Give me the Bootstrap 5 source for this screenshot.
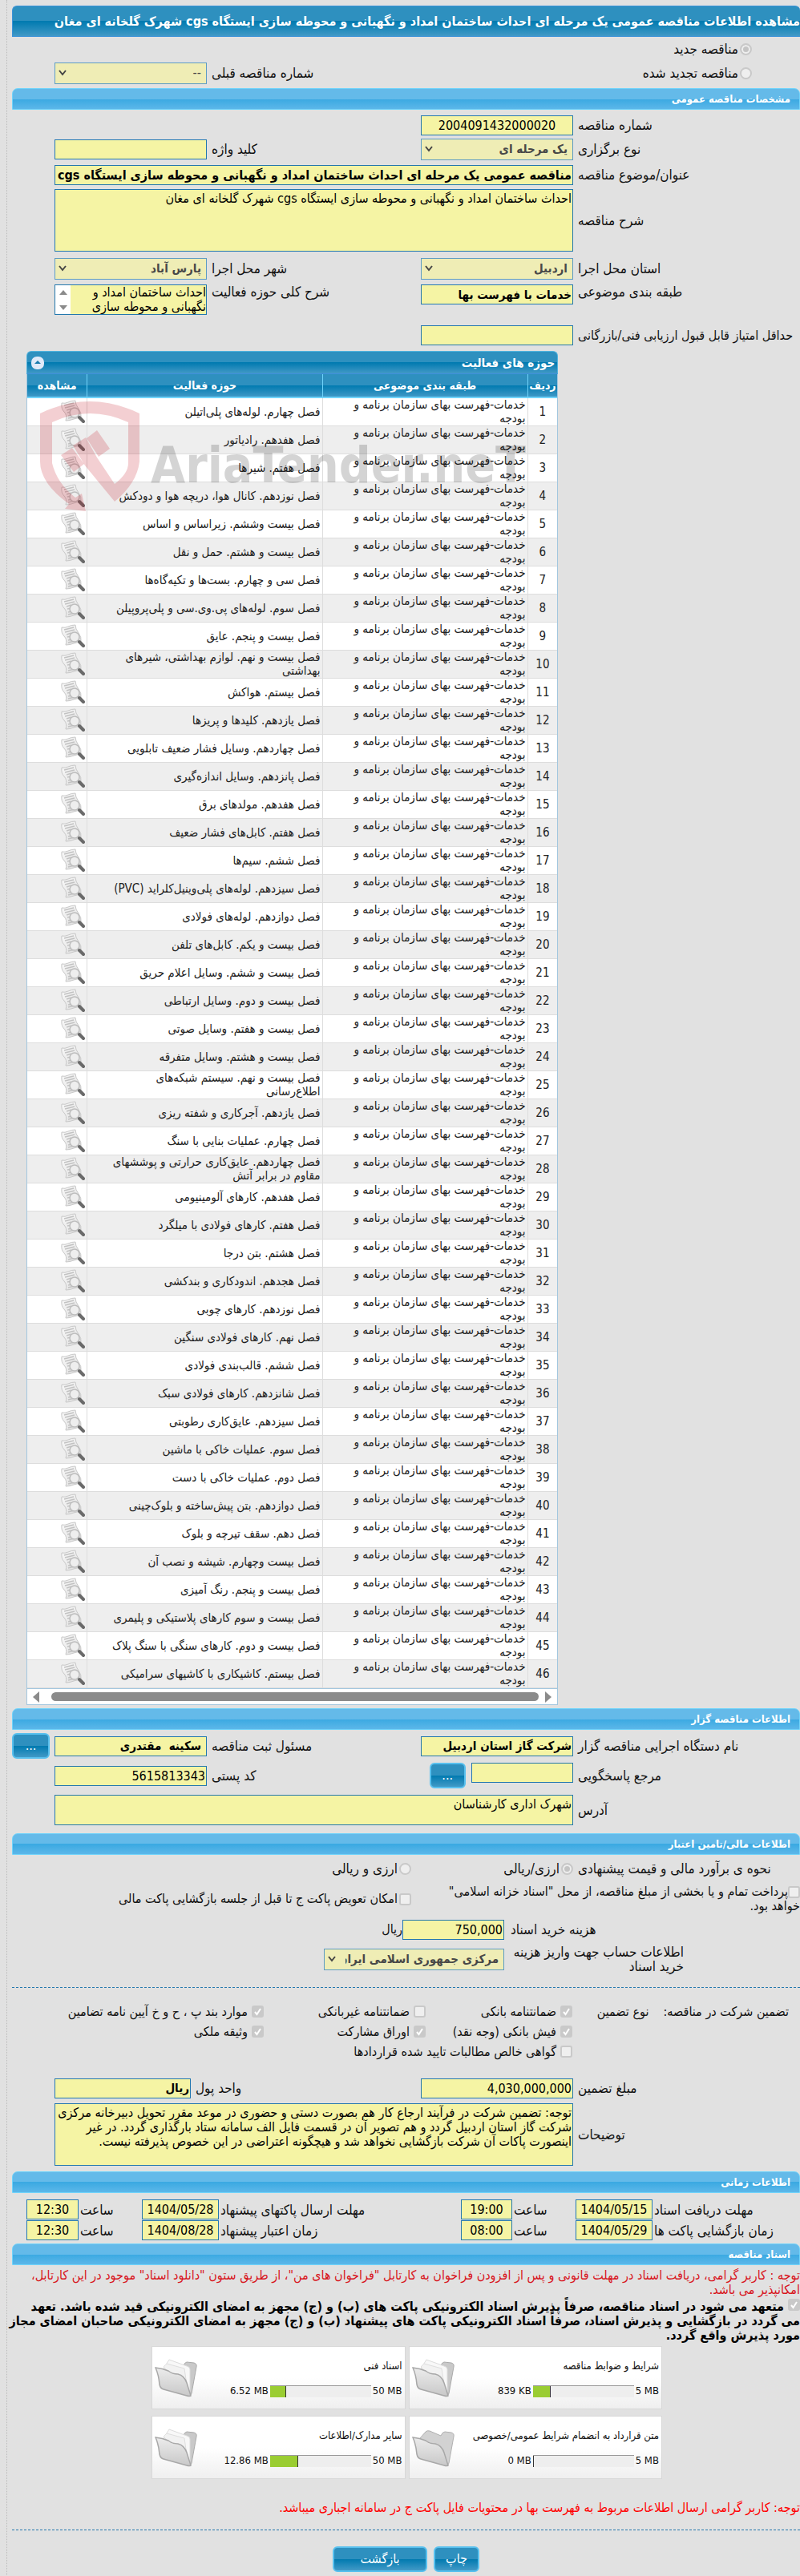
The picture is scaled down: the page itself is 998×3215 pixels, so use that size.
<!DOCTYPE html>
<html lang="fa" dir="rtl">
<head>
<meta charset="utf-8">
<meta name="viewport" content="width=device-width, initial-scale=1">
<title>مشاهده اطلاعات مناقصه عمومی</title>
<link rel="stylesheet" href="https://cdn.jsdelivr.net/npm/bootstrap@5.3.0/dist/css/bootstrap.min.css">
<style>
  body { background: #e1e1e1; color: #111; font: 16px/18px "DejaVu Sans Condensed", "DejaVu Sans", sans-serif; overflow-x: hidden; }
  .page-frame { margin-left: 8px; padding: 7px 0 4px 6px; border-left: 1px dotted #bbb; }
  .title-strip { height: 39px; margin: 0; font-size: 16px; font-weight: 700; color: #fff; white-space: nowrap; overflow: hidden;
    border: 1px solid #3a92d8; border-radius: 6px 6px 0 0; border-right: 0;
    background: linear-gradient(#2e90bf 0 50%, #007ab0 50%, #4199c6); }
  .section-strip { height: 27px; margin: 0; padding: 0 11px; font-size: 13px; font-weight: 700; color: #fff;
    border: 1px solid #6fd3fa; border-radius: 7px 7px 0 0;
    background: linear-gradient(#64bae9 0 50%, #3aa9e2 50%, #5cb7e9); }
  .frow { display: grid; column-gap: 6px; align-items: center; grid-template-columns: 277fr 190fr 255fr 190fr 47fr; min-height: 30px; }
  .frow > * { min-width: 0; }
  .frow > label, .lbl { text-align: left; font-size: 17px; white-space: nowrap; }
  .frow > .tight { font-size: 16px; }
  .h34 { min-height: 34px; } .h40 { min-height: 40px; }
  .wide { grid-column: 2 / span 3; }
  .fld { width: 100%; height: 25px; padding: 0 1px; border: 1px solid #2478ae; border-radius: 0; background: #f5f4a4; color: #000; font-size: 16px; line-height: 18px; display: block; }
  textarea.fld { resize: none; overflow: hidden; padding-top: 2px; }
  .sel { width: 100%; height: 27px; padding: 0 6px 0 26px; border: 1px solid #5d9cc4; border-radius: 0; color: #484848; opacity: 1; font-size: 16px; font-weight: 400; appearance: none;
    background: #efedb5 url("data:image/svg+xml,%3Csvg xmlns='http://www.w3.org/2000/svg' width='12' height='8'%3E%3Cpath d='M2 1l4 5 4-5' fill='none' stroke='%23444' stroke-width='2'/%3E%3C/svg%3E") no-repeat 3px center; }
  .semi { font-weight: 700; font-size: 15px; }
  .wide.semi { font-size: 16px; }
  .tick { appearance: none; flex: none; width: 15px; height: 15px; margin: 0; border: 2px solid #c9c9c9; border-radius: 3px; background: #efefef; }
  .tick[type=radio] { border-radius: 50%; }
  .tick[type=radio]:checked { background: #c4c4c4; box-shadow: inset 0 0 0 2px #efefef; }
  .tick[type=checkbox]:checked { border-color: #c9c9c9; background: #c9c9c9 url("data:image/svg+xml,%3Csvg xmlns='http://www.w3.org/2000/svg' viewBox='0 0 11 11'%3E%3Cpath d='M2 6l2.500 3L9 2' fill='none' stroke='%23fff' stroke-width='2'/%3E%3C/svg%3E") center/contain; }
  .opt { display: flex; align-items: center; gap: 2px; font-size: 17px; white-space: nowrap; }
  .inset { padding-right: 60px; }
  .gloss { border: 2px solid #57c0ee; border-radius: 6px; color: #fff; background: linear-gradient(#2e90bf 0 50%, #007ab0 50%, #4199c6); height: 32px; padding: 0; }
  .spin { width: 19px; background: #fff; flex: none; }
  .grid-box { position: relative; width: 67.5%; margin-right: 30.7%; }
  .grid-head { height: 29px; padding: 0 3px 0 5px; color: #fff; font-weight: 700; font-size: 15px; border: 1px solid #4fb2dd; border-bottom-color: #3f8fdb; border-radius: 6px 6px 0 0; background: linear-gradient(#2e90bf 0 50%, #007ab0 50%, #4199c6); }
  .grid-data { width: 100%; table-layout: fixed; font-size: 15px; line-height: 17px; border: 1px solid #a3c7df; border-top: 0; border-collapse: separate; border-spacing: 0; color: #222; }
  .grid-data th { height: 30px; padding: 0; text-align: center; color: #fff; font-size: 14px; border-bottom: 2px solid #6fd3fa; border-left: 1px solid #6fd3fa; background: linear-gradient(#2e90bf 0 50%, #007ab0 50%, #3f98c6); white-space: nowrap; }
  .grid-data td { height: 35px; padding: 0 2px 0 18px; border-bottom: 1px solid #ddd; border-left: 1px solid #ddd; background: #fff; vertical-align: middle; }
  .grid-data tr:nth-child(even) td { background: #eee; }
  .grid-data td:nth-child(1) { text-align: center; padding: 0; }
  .grid-data td:nth-child(4) { padding: 0 2px 0 0; }
  .grid-data th:last-child, .grid-data td:last-child { border-left: 0; }
  .grid-data svg { display: block; }
  .hbar { height: 20px; padding: 0 7px; background: #fff; border: 1px solid #a3c7df; border-top: 0; }
  .hbar i { flex: 1; height: 11px; border-radius: 6px; background: #8b8b8b; margin: 0 8px 0 15px; }
  .wmark { position: absolute; left: 0; top: 53px; pointer-events: none; }
  .dash { border-top: 1px dashed #2478ae; margin: 0; opacity: 1; color: inherit; }
  .two { grid-template-columns: 479fr 498fr; } .three { grid-template-columns: 277fr 196fr 498fr; }
  .pay { grid-template-columns: 369fr 127fr 487fr; column-gap: 0; } .bank { grid-template-columns: 361fr 225fr 381fr; column-gap: 8px; }
  .warranty { display: grid; grid-template-columns: 284fr 183fr 202fr 314fr; grid-auto-rows: 25px; align-items: center; }
  .warranty .opt { gap: 5px; font-size: 16px; }
  .money { grid-template-columns: 277fr 190fr 275fr 170fr 47fr; }
  .times { display: grid; column-gap: 2px; grid-template-columns: 182fr 96fr 75fr 64fr 298fr 96fr 75fr 65fr 16fr; align-items: center; row-gap: 1px; }
  .times .fld { text-align: center; padding: 0; }
  .pledge { margin: 2px 0 4px -5px; color: #000; font-weight: 700; }
  .docs { display: grid; grid-template-columns: 1fr 1fr; gap: 8px 4px; width: 64.8%; margin-right: 17.5%; }
  .doc { height: 79px; border: 1px solid #d8d8d8; background: linear-gradient(#fff 0 50%, #efefef); padding: 15px 3px 0; font-size: 13px; display: flex; justify-content: space-between; }
  .doc .meter { display: flex; gap: 2px; margin-top: 13px; align-items: center; }
  .doc .track { width: 126px; height: 15px; background: #eee; border-top: 1px solid #999; }
  .doc .track b { display: block; height: 14px; background: #9acd32; border-right: 1px solid #333; }
</style>
</head>
<body>
<svg width="0" height="0" class="position-absolute" aria-hidden="true">
  <defs>
    <linearGradient id="gp" x1="0" y1="0" x2="1" y2="1"><stop offset="0" stop-color="#fafafa"/><stop offset="1" stop-color="#dcdcdc"/></linearGradient>
    <linearGradient id="gf" x1="0" y1="0" x2="0" y2="1"><stop offset="0" stop-color="#ececec"/><stop offset="1" stop-color="#c8c8c8"/></linearGradient>
    <symbol id="look" viewBox="0 0 30 30">
      <path d="M1 4q4 1 8-1t9-2q0 5 4 10t3 12q-4-1-9 1t-10 2q2-7-2-11T1 4z" fill="url(#gp)" stroke="#c8c8c8"/>
      <path d="M4 7l12-3M5 10l12-3M7 13l6-2M8 16l5-1M9 20l5-1M9 23l8-2" stroke="#c2c2c2" stroke-width="1.500"/>
      <circle cx="17" cy="16" r="6" fill="#eee" fill-opacity=".9" stroke="#bdbdbd" stroke-width="1.500"/>
      <path d="M23 22l5 5" stroke="#6a6a6a" stroke-width="4" stroke-linecap="round"/>
    </symbol>
    <symbol id="folder" viewBox="0 0 54 48">
      <path d="M34 14q2-9 6-10l9 1q4 1 3 5l-6 33q-1 4-4 3z" fill="#c9c9c9" stroke="#aaa"/>
      <path d="M11 12L18 1l22 8q4 1 4 4v28z" fill="#f8f8f8" stroke="#dcdcdc"/>
      <path d="M11 10l4-4 22 6 4 28z" fill="#f2f2f2" stroke="#dedede"/>
      <path d="M1 11q9 1 16 4 5 4 12 4 8 2 11 11l5 16q-2 1-5 0L11 38Q7 37 6 32 5 20 1 11z" fill="url(#gf)" stroke="#a8a8a8" stroke-width="1.500"/>
    </symbol>
    <symbol id="folder-empty" viewBox="0 0 54 48">
      <path d="M10 12l7-8q2-2 5-1l14 6q2-5 5-5l8 1q4 1 3 5l-6 33q-1 4-4 3z" fill="#d2d2d2" stroke="#b0b0b0"/>
      <path d="M1 11q9 1 16 4 5 4 12 4 8 2 11 11l5 16q-2 1-5 0L11 38Q7 37 6 32 5 20 1 11z" fill="url(#gf)" stroke="#a8a8a8" stroke-width="1.500"/>
    </symbol>
  </defs>
</svg>
<main class="page-frame">
  <h1 class="title-strip d-flex align-items-center">مشاهده اطلاعات مناقصه عمومی یک مرحله ای احداث ساختمان امداد و نگهبانی و محوطه سازی ایستگاه cgs شهرک گلخانه ای مغان</h1>
  <div class="frow"><div class="opt inset"><input class="tick" type="radio" name="kind" id="k1" checked disabled><label for="k1">مناقصه جدید</label></div></div>
  <div class="frow mb-1"><div class="opt inset"><input class="tick" type="radio" name="kind" id="k2" disabled><label for="k2">مناقصه تجدید شده</label></div><span></span><label for="prev">شماره مناقصه قبلی</label><select class="sel" id="prev" disabled><option>--</option></select></div>

  <h2 class="section-strip d-flex align-items-center">مشخصات مناقصه عمومی</h2>
  <div class="frow mt-1"><label for="no">شماره مناقصه</label><input class="fld text-center" id="no" value="2004091432000020" readonly></div>
  <div class="frow"><label for="type">نوع برگزاری</label><select class="sel semi" id="type" disabled><option>یک مرحله ای</option></select><label for="kw">کلید واژه</label><input class="fld" id="kw" readonly></div>
  <div class="frow h34"><label for="subj">عنوان/موضوع مناقصه</label><input class="fld wide semi" id="subj" value="مناقصه عمومی یک مرحله ای احداث ساختمان امداد و نگهبانی و محوطه سازی ایستگاه cgs شهرک گلخانه ای مغان" readonly></div>
  <div class="frow" style="min-height:80px"><label for="desc">شرح مناقصه</label><textarea class="fld wide" id="desc" style="height:78px" readonly>احداث ساختمان امداد و نگهبانی و محوطه سازی ایستگاه cgs شهرک گلخانه ای مغان</textarea></div>
  <div class="frow h40"><label for="prov">استان محل اجرا</label><select class="sel semi" id="prov" disabled><option>اردبیل</option></select><label for="city">شهر محل اجرا</label><select class="sel semi" id="city" disabled><option>پارس آباد</option></select></div>
  <div class="frow align-items-start"><label for="cls">طبقه بندی موضوعی</label><input class="fld semi" id="cls" value="خدمات با فهرست بها" readonly><label for="area">شرح کلی حوزه فعالیت</label>
    <div class="fld d-flex p-0" style="height:38px"><textarea class="border-0 flex-grow-1 bg-transparent p-0" id="area" style="resize:none;overflow:hidden;width:0;height:36px" readonly>احداث ساختمان امداد و نگهبانی و محوطه سازی</textarea><svg class="spin" height="36" viewBox="0 0 19 36"><path d="M5 12l5-6 5 6zM5 25l5 6 5-6z" fill="#8b8b8b"/></svg></div></div>
  <div class="frow" style="min-height:45px;padding-top:6px"><label class="tight" for="min">حداقل امتیاز قابل قبول ارزیابی فنی/بازرگانی</label><input class="fld" id="min" readonly></div>

  <section class="grid-box">
    <div class="grid-head d-flex align-items-center justify-content-between"><span>حوزه های فعالیت</span>
      <svg width="16" height="16" viewBox="0 0 16 16"><rect width="16" height="16" rx="7" fill="#dfe9f8"/><path d="M4 9l4-4 4 4z" fill="#1879ad"/></svg></div>
    <table class="grid-data">
      <colgroup><col style="width:5.7%"><col style="width:38.7%"><col style="width:44.3%"><col></colgroup>
      <thead><tr><th>ردیف</th><th>طبقه بندی موضوعی</th><th>حوزه فعالیت</th><th>مشاهده</th></tr></thead>
      <tbody id="rows"></tbody>
    </table>
    <div class="hbar d-flex align-items-center"><svg width="8" height="14"><path d="M0 0l8 7-8 7z" fill="#8b8b8b"/></svg><i></i><svg width="8" height="14"><path d="M8 0L0 7l8 7z" fill="#8b8b8b"/></svg></div>
    <svg class="wmark" width="640" height="150" viewBox="0 0 640 150" aria-hidden="true">
      <g fill="#c00010" fill-opacity=".19"><path d="M17 25Q79-5 141 25V85Q138 112 110 135L73 90 58 65 74 55 88 80 110 113Q127 100 127 87V36Q79 14 32 36V87Q38 112 61 130L69 125 74 147 48 144 53 138Q17 112 17 85Z"/><path d="M88 46l16 23-14 10-15-23zM43 77l14-9 15 20-13 10z"/></g>
      <text x="155" y="111" direction="ltr" font-family="DejaVu Sans Condensed, sans-serif" font-weight="700" font-size="62" fill="#000" fill-opacity=".17">AriaTender.neT</text>
    </svg>
  </section>

  <h2 class="section-strip d-flex align-items-center mt-1">اطلاعات مناقصه گزار</h2>
  <div class="frow h40"><label for="org">نام دستگاه اجرایی مناقصه گزار</label><input class="fld semi" id="org" value="شرکت گاز استان اردبیل" readonly><label for="resp">مسئول ثبت مناقصه</label><input class="fld semi" id="resp" style="padding-right:6px" value="سکینه  مقتدری" readonly><button class="gloss" type="button">...</button></div>
  <div class="frow h34"><label for="ref">مرجع پاسخگویی</label><div class="d-flex"><input class="fld" style="width:67%" id="ref" readonly><button class="gloss" type="button" style="width:45px;margin-right:7px">...</button></div><label for="zip">کد پستی</label><input class="fld" id="zip" value="5615813343" readonly></div>
  <div class="frow" style="min-height:51px"><label for="addr">آدرس</label><textarea class="fld wide" id="addr" style="height:38px" readonly>شهرک اداری کارشناسان</textarea></div>

  <h2 class="section-strip d-flex align-items-center mt-1">اطلاعات مالی/تامین اعتبار</h2>
  <div class="frow three h34"><span class="lbl">نحوه ی برآورد مالی و قیمت پیشنهادی</span><div class="opt"><input class="tick" type="radio" name="cur" id="c1" checked disabled><label for="c1">ارزی/ریالی</label></div><div class="opt"><input class="tick" type="radio" name="cur" id="c2" disabled><label for="c2">ارزی و ریالی</label></div></div>
  <div class="frow two" style="min-height:42px"><div style="padding-left:24px"><input class="tick align-middle" type="checkbox" id="b1" disabled><label for="b1" class="d-inline">پرداخت تمام و یا بخشی از مبلغ مناقصه، از محل "اسناد خزانه اسلامی" خواهد بود.</label></div><div class="opt" style="font-size:16px"><input class="tick" type="checkbox" id="b2" disabled><label for="b2">امکان تعویض پاکت ج تا قبل از جلسه بازگشایی پاکت مالی</label></div></div>
  <div class="frow pay h34"><label for="fee" style="padding-left:8px">هزینه خرید اسناد</label><input class="fld" id="fee" value="750,000" readonly><span>ریال</span></div>
  <div class="frow bank" style="min-height:40px"><label for="bank" style="width:216px;justify-self:end;text-align:right;white-space:normal">اطلاعات حساب جهت واریز هزینه خرید اسناد</label><select class="sel semi" id="bank" disabled><option>مرکزی جمهوری اسلامی ایران</option></select></div>
  <hr class="dash" style="margin-top:15px">

  <div class="warranty" style="margin-top:17px">
    <div class="d-flex" style="padding-right:14px;gap:18px"><span>تضمین شرکت در مناقصه:</span><span>نوع تضمین</span></div>
    <div class="opt"><input class="tick" type="checkbox" id="w1" checked disabled><label for="w1">ضمانتنامه بانکی</label></div>
    <div class="opt"><input class="tick" type="checkbox" id="w2" disabled><label for="w2">ضمانتنامه غیربانکی</label></div>
    <div class="opt"><input class="tick" type="checkbox" id="w3" checked disabled><label for="w3">موارد بند پ ، ح و خ آیین نامه تضامین</label></div>
    <span></span>
    <div class="opt"><input class="tick" type="checkbox" id="w4" checked disabled><label for="w4">فیش بانکی (وجه نقد)</label></div>
    <div class="opt"><input class="tick" type="checkbox" id="w5" checked disabled><label for="w5">اوراق مشارکت</label></div>
    <div class="opt"><input class="tick" type="checkbox" id="w6" checked disabled><label for="w6">وثیقه ملکی</label></div>
    <span></span>
    <div class="opt" style="grid-column:span 3"><input class="tick" type="checkbox" id="w7" disabled><label for="w7">گواهی خالص مطالبات تایید شده قراردادها</label></div>
  </div>
  <div class="frow money" style="margin-top:18px"><label for="amt">مبلغ تضمین</label><input class="fld" id="amt" value="4,030,000,000" readonly><label for="unit">واحد پول</label><input class="fld semi" id="unit" value="ریال" readonly></div>
  <div class="frow" style="min-height:85px"><label for="note">توضیحات</label><textarea class="fld wide" id="note" style="height:78px" readonly>توجه: تضمین شرکت در فرآیند ارجاع کار هم بصورت دستی و حضوری در موعد مقرر تحویل دبیرخانه مرکزی شرکت گاز استان اردبیل گردد و هم تصویر آن در قسمت فایل الف سامانه ستاد بارگذاری گردد. در غیر اینصورت پاکات آن شرکت بازگشایی نخواهد شد و هیچگونه اعتراضی در این خصوص پذیرفته نیست.</textarea></div>

  <h2 class="section-strip d-flex align-items-center mt-1">اطلاعات زمانی</h2>
  <div class="times mt-2 mb-1">
    <label class="lbl" for="t1">مهلت دریافت اسناد</label><input class="fld" id="t1" value="1404/05/15" readonly><label class="lbl" for="t2">ساعت</label><input class="fld" id="t2" value="19:00" readonly>
    <label class="lbl" for="t3">مهلت ارسال پاکتهای پیشنهاد</label><input class="fld" id="t3" value="1404/05/28" readonly><label class="lbl" for="t4">ساعت</label><input class="fld" id="t4" value="12:30" readonly><span></span>
    <label class="lbl" for="t5">زمان بازگشایی پاکت ها</label><input class="fld" id="t5" value="1404/05/29" readonly><label class="lbl" for="t6">ساعت</label><input class="fld" id="t6" value="08:00" readonly>
    <label class="lbl" for="t7">زمان اعتبار پیشنهاد</label><input class="fld" id="t7" value="1404/08/28" readonly><label class="lbl" for="t8">ساعت</label><input class="fld" id="t8" value="12:30" readonly><span></span>
  </div>

  <h2 class="section-strip d-flex align-items-center">اسناد مناقصه</h2>
  <p class="mb-0 mt-1" style="color:#d8141c">توجه : کاربر گرامی، دریافت اسناد در مهلت قانونی و پس از افزودن فراخوان به کارتابل "فراخوان های من"، از طریق ستون "دانلود اسناد" موجود در این کارتابل، امکانپذیر می باشد.</p>
  <div class="pledge"><input class="tick" type="checkbox" id="agree" checked disabled> <label for="agree" class="d-inline">متعهد می شود در اسناد مناقصه، صرفاً پذیرش اسناد الکترونیکی پاکت های (ب) و (ج) مجهز به امضای الکترونیکی قید شده باشد. تعهد می&nbsp;گردد در بازگشایی و پذیرش اسناد، صرفاً اسناد الکترونیکی پاکت های پیشنهاد (ب) و (ج) مجهز به امضای الکترونیکی صاحبان امضای مجاز مورد پذیرش واقع گردد.</label></div>
  <div class="docs">
    <div class="doc"><div><div>شرایط و ضوابط مناقصه</div><div class="meter"><span dir="ltr">5 MB</span><div class="track" dir="ltr"><b style="width:18%"></b></div><span dir="ltr">839 KB</span></div></div><svg width="54" height="48"><use href="#folder"/></svg></div>
    <div class="doc"><div><div>اسناد فنی</div><div class="meter"><span dir="ltr">50 MB</span><div class="track" dir="ltr"><b style="width:16%"></b></div><span dir="ltr">6.52 MB</span></div></div><svg width="54" height="48"><use href="#folder"/></svg></div>
    <div class="doc"><div><div>متن قرارداد به انضمام شرایط عمومی/خصوصی</div><div class="meter"><span dir="ltr">5 MB</span><div class="track" dir="ltr"><b style="width:1%"></b></div><span dir="ltr">0 MB</span></div></div><svg width="54" height="48"><use href="#folder-empty"/></svg></div>
    <div class="doc"><div><div>سایر مدارک/اطلاعات</div><div class="meter"><span dir="ltr">50 MB</span><div class="track" dir="ltr"><b style="width:28%"></b></div><span dir="ltr">12.86 MB</span></div></div><svg width="54" height="48"><use href="#folder"/></svg></div>
  </div>
  <p style="color:#f00;margin:27px 0 18px">توجه: کاربر گرامی ارسال اطلاعات مربوط به فهرست بها در محتویات فایل پاکت ج در سامانه اجباری میباشد.</p>
  <hr class="dash">
  <div class="d-flex justify-content-center gap-2" style="margin-top:20px"><button class="gloss" type="button" style="width:57px">چاپ</button><button class="gloss" type="button" style="width:118px">بازگشت</button></div>
</main>
<script>
const areas = ["فصل چهارم. لوله‌های پلی‌اتیلن","فصل هفدهم. رادیاتور","فصل هفتم. شیرها","فصل نوزدهم. کانال هوا، دریچه هوا و دودکش","فصل بیست وششم. زیراساس و اساس","فصل بیست و هشتم. حمل و نقل","فصل سی و چهارم. بست‌ها و تکیه‌گاه‌ها","فصل سوم. لوله‌های پی.وی.سی و پلی‌پروپیلن","فصل بیست و پنجم. عایق","فصل بیست و نهم. لوازم بهداشتی، شیرهای بهداشتی","فصل بیستم. هواکش","فصل یازدهم. کلیدها و پریزها","فصل چهاردهم. وسایل فشار ضعیف تابلویی","فصل پانزدهم. وسایل اندازه‌گیری","فصل هفدهم. مولدهای برق","فصل هفتم. کابل‌های فشار ضعیف","فصل ششم. سیم‌ها","فصل سیزدهم. لوله‌های پلی‌وینیل‌کلراید (PVC)","فصل دوازدهم. لوله‌های فولادی","فصل بیست و یکم. کابل‌های تلفن","فصل بیست و ششم. وسایل اعلام حریق","فصل بیست و دوم. وسایل ارتباطی","فصل بیست و هفتم. وسایل صوتی","فصل بیست و هشتم. وسایل متفرقه","فصل بیست و نهم. سیستم شبکه‌های اطلاع‌رسانی","فصل یازدهم. آجرکاری و شفته ریزی","فصل چهارم. عملیات بنایی با سنگ","فصل چهاردهم. عایق‌کاری حرارتی و پوششهای مقاوم در برابر آتش","فصل هفدهم. کارهای آلومینیومی","فصل هفتم. کارهای فولادی با میلگرد","فصل هشتم. بتن درجا","فصل هجدهم. اندودکاری و بندکشی","فصل نوزدهم. کارهای چوبی","فصل نهم. کارهای فولادی سنگین","فصل ششم. قالب‌بندی فولادی","فصل شانزدهم. کارهای فولادی سبک","فصل سیزدهم. عایق‌کاری رطوبتی","فصل سوم. عملیات خاکی با ماشین","فصل دوم. عملیات خاکی با دست","فصل دوازدهم. بتن پیش‌ساخته و بلوک‌چینی","فصل دهم. سقف تیرچه و بلوک","فصل بیست وچهارم. شیشه و نصب آن","فصل بیست و پنجم. رنگ آمیزی","فصل بیست و سوم کارهای پلاستیکی و پلیمری","فصل بیست و دوم. کارهای سنگی با سنگ پلاک","فصل بیستم. کاشیکاری با کاشیهای سرامیکی"];
document.getElementById("rows").innerHTML = areas.map((t, i) =>
  `<tr><td>${i + 1}</td><td>خدمات-فهرست بهای سازمان برنامه و بودجه</td><td>${t}</td><td><a href="#" aria-label="مشاهده"><svg width="30" height="30"><use href="#look"/></svg></a></td></tr>`).join("");
</script>
<script src="https://cdn.jsdelivr.net/npm/bootstrap@5.3.0/dist/js/bootstrap.bundle.min.js"></script>
</body>
</html>
